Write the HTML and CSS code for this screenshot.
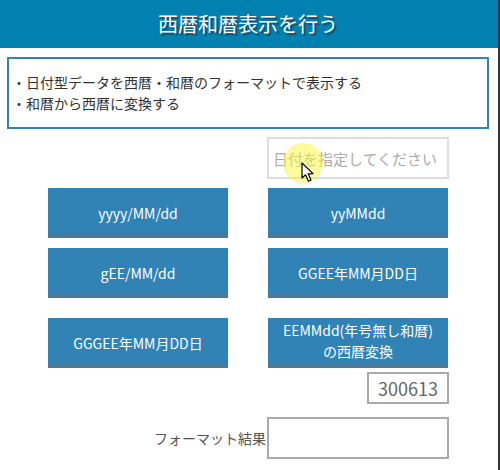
FILE: index.html
```html
<!DOCTYPE html>
<html lang="ja">
<head>
    <meta charset="UTF-8">
    <title>西暦和暦表示を行う</title>
    <link rel="stylesheet" href="styles.css">
</head>
<body>
    <header class="title-bar">
        <h1>西暦和暦表示を行う</h1>
    </header>
    <div class="description">
        <p>・日付型データを西暦・和暦のフォーマットで表示する</p>
        <p>・和暦から西暦に変換する</p>
    </div>
    <div class="date-row">
        <input class="date-input" type="text" placeholder="日付を指定してください">
    </div>
    <div class="buttons">
        <button class="btn">yyyy/MM/dd</button>
        <button class="btn">yyMMdd</button>
        <button class="btn">gEE/MM/dd</button>
        <button class="btn">GGEE年MM月DD日</button>
        <button class="btn btn-low">GGGEE年MM月DD日</button>
        <button class="btn btn-low btn-two-line">EEMMdd(年号無し和暦)<br>の西暦変換</button>
    </div>
    <div class="code-row">
        <input class="code-input" type="text" value="300613">
    </div>
    <div class="result-row">
        <label class="result-label">フォーマット結果</label>
        <input class="result-input" type="text">
    </div>

    <!-- カーソルのハイライト -->
    <div class="cursor-spot"></div>
    <svg class="cursor" width="14" height="21" viewBox="0 0 14 21">
        <path d="M1 1 L1 16 L4.6 12.8 L7.4 19.2 L10 18 L7.2 11.8 L12 11.6 Z" fill="#fff" stroke="#000" stroke-width="1.2" stroke-linejoin="round"/>
    </svg>
</body>
</html>
```

FILE: styles.css
```css
* {
    box-sizing: border-box;
}

html {
    background: #333;
}

body {
    font-family: "Noto Sans CJK JP", "Noto Sans", sans-serif;
    margin: 0;
    width: 498px;
    height: 470px;
    overflow: hidden;
    position: relative;
    color: #333;
    background: #fff;
}

.title-bar {
    background: #0081b0;
    height: 48px;
    display: flex;
    align-items: center;
    justify-content: center;
    padding-right: 2px;
}

.title-bar h1 {
    margin: 0;
    color: #fff;
    font-size: 20px;
    font-weight: 400;
    line-height: 1;
    text-shadow: 2px 2px 1px #1a4a66;
}

.description {
    margin: 9px 9px 0 7px;
    height: 72px;
    border: 2px solid #3182b5;
    padding: 13px 6px 0 3px;
    font-size: 14px;
    line-height: 21px;
}

.description p {
    margin: 0;
}

.date-row {
    display: flex;
    justify-content: flex-end;
    padding: 8px 49px 0 0;
}

.date-input {
    width: 182px;
    height: 42px;
    border: 2px solid #ddd;
    padding: 0 4px;
    font-family: inherit;
    font-size: 15px;
    background: #fff;
    outline: none;
}

.date-input::placeholder {
    color: #aaa;
    opacity: 1;
}

.buttons {
    display: grid;
    grid-template-columns: 180px 180px;
    column-gap: 40px;
    row-gap: 10px;
    padding: 9px 0 0 48px;
}

.btn {
    height: 50px;
    border: 0;
    border-bottom: 5px solid #4a7a9a;
    background: #3182b5;
    color: #fff;
    font-family: inherit;
    font-size: 14px;
    line-height: 21px;
    padding: 6px 0 0;
}

.btn-low {
    margin-top: 10px;
}

.btn-two-line {
    padding-top: 1px;
}

.code-row {
    display: flex;
    justify-content: flex-end;
    padding: 4px 49px 0 0;
}

.code-input {
    width: 82px;
    height: 32px;
    border: 2px solid #aaa;
    padding: 0 9px;
    font-family: inherit;
    font-size: 18px;
    color: #666;
    text-align: right;
    outline: none;
}

.result-row {
    display: flex;
    justify-content: flex-end;
    align-items: center;
    padding: 13px 49px 0 0;
}

.result-label {
    font-size: 14px;
    color: #555;
    margin-right: 1px;
}

.result-input {
    width: 182px;
    height: 42px;
    border: 2px solid #aaa;
    outline: none;
}

.cursor-spot {
    position: absolute;
    left: 283px;
    top: 143px;
    width: 40px;
    height: 40px;
    border-radius: 50%;
    background: rgba(250, 245, 60, 0.5);
}

.cursor {
    position: absolute;
    left: 301px;
    top: 162px;
}
```
